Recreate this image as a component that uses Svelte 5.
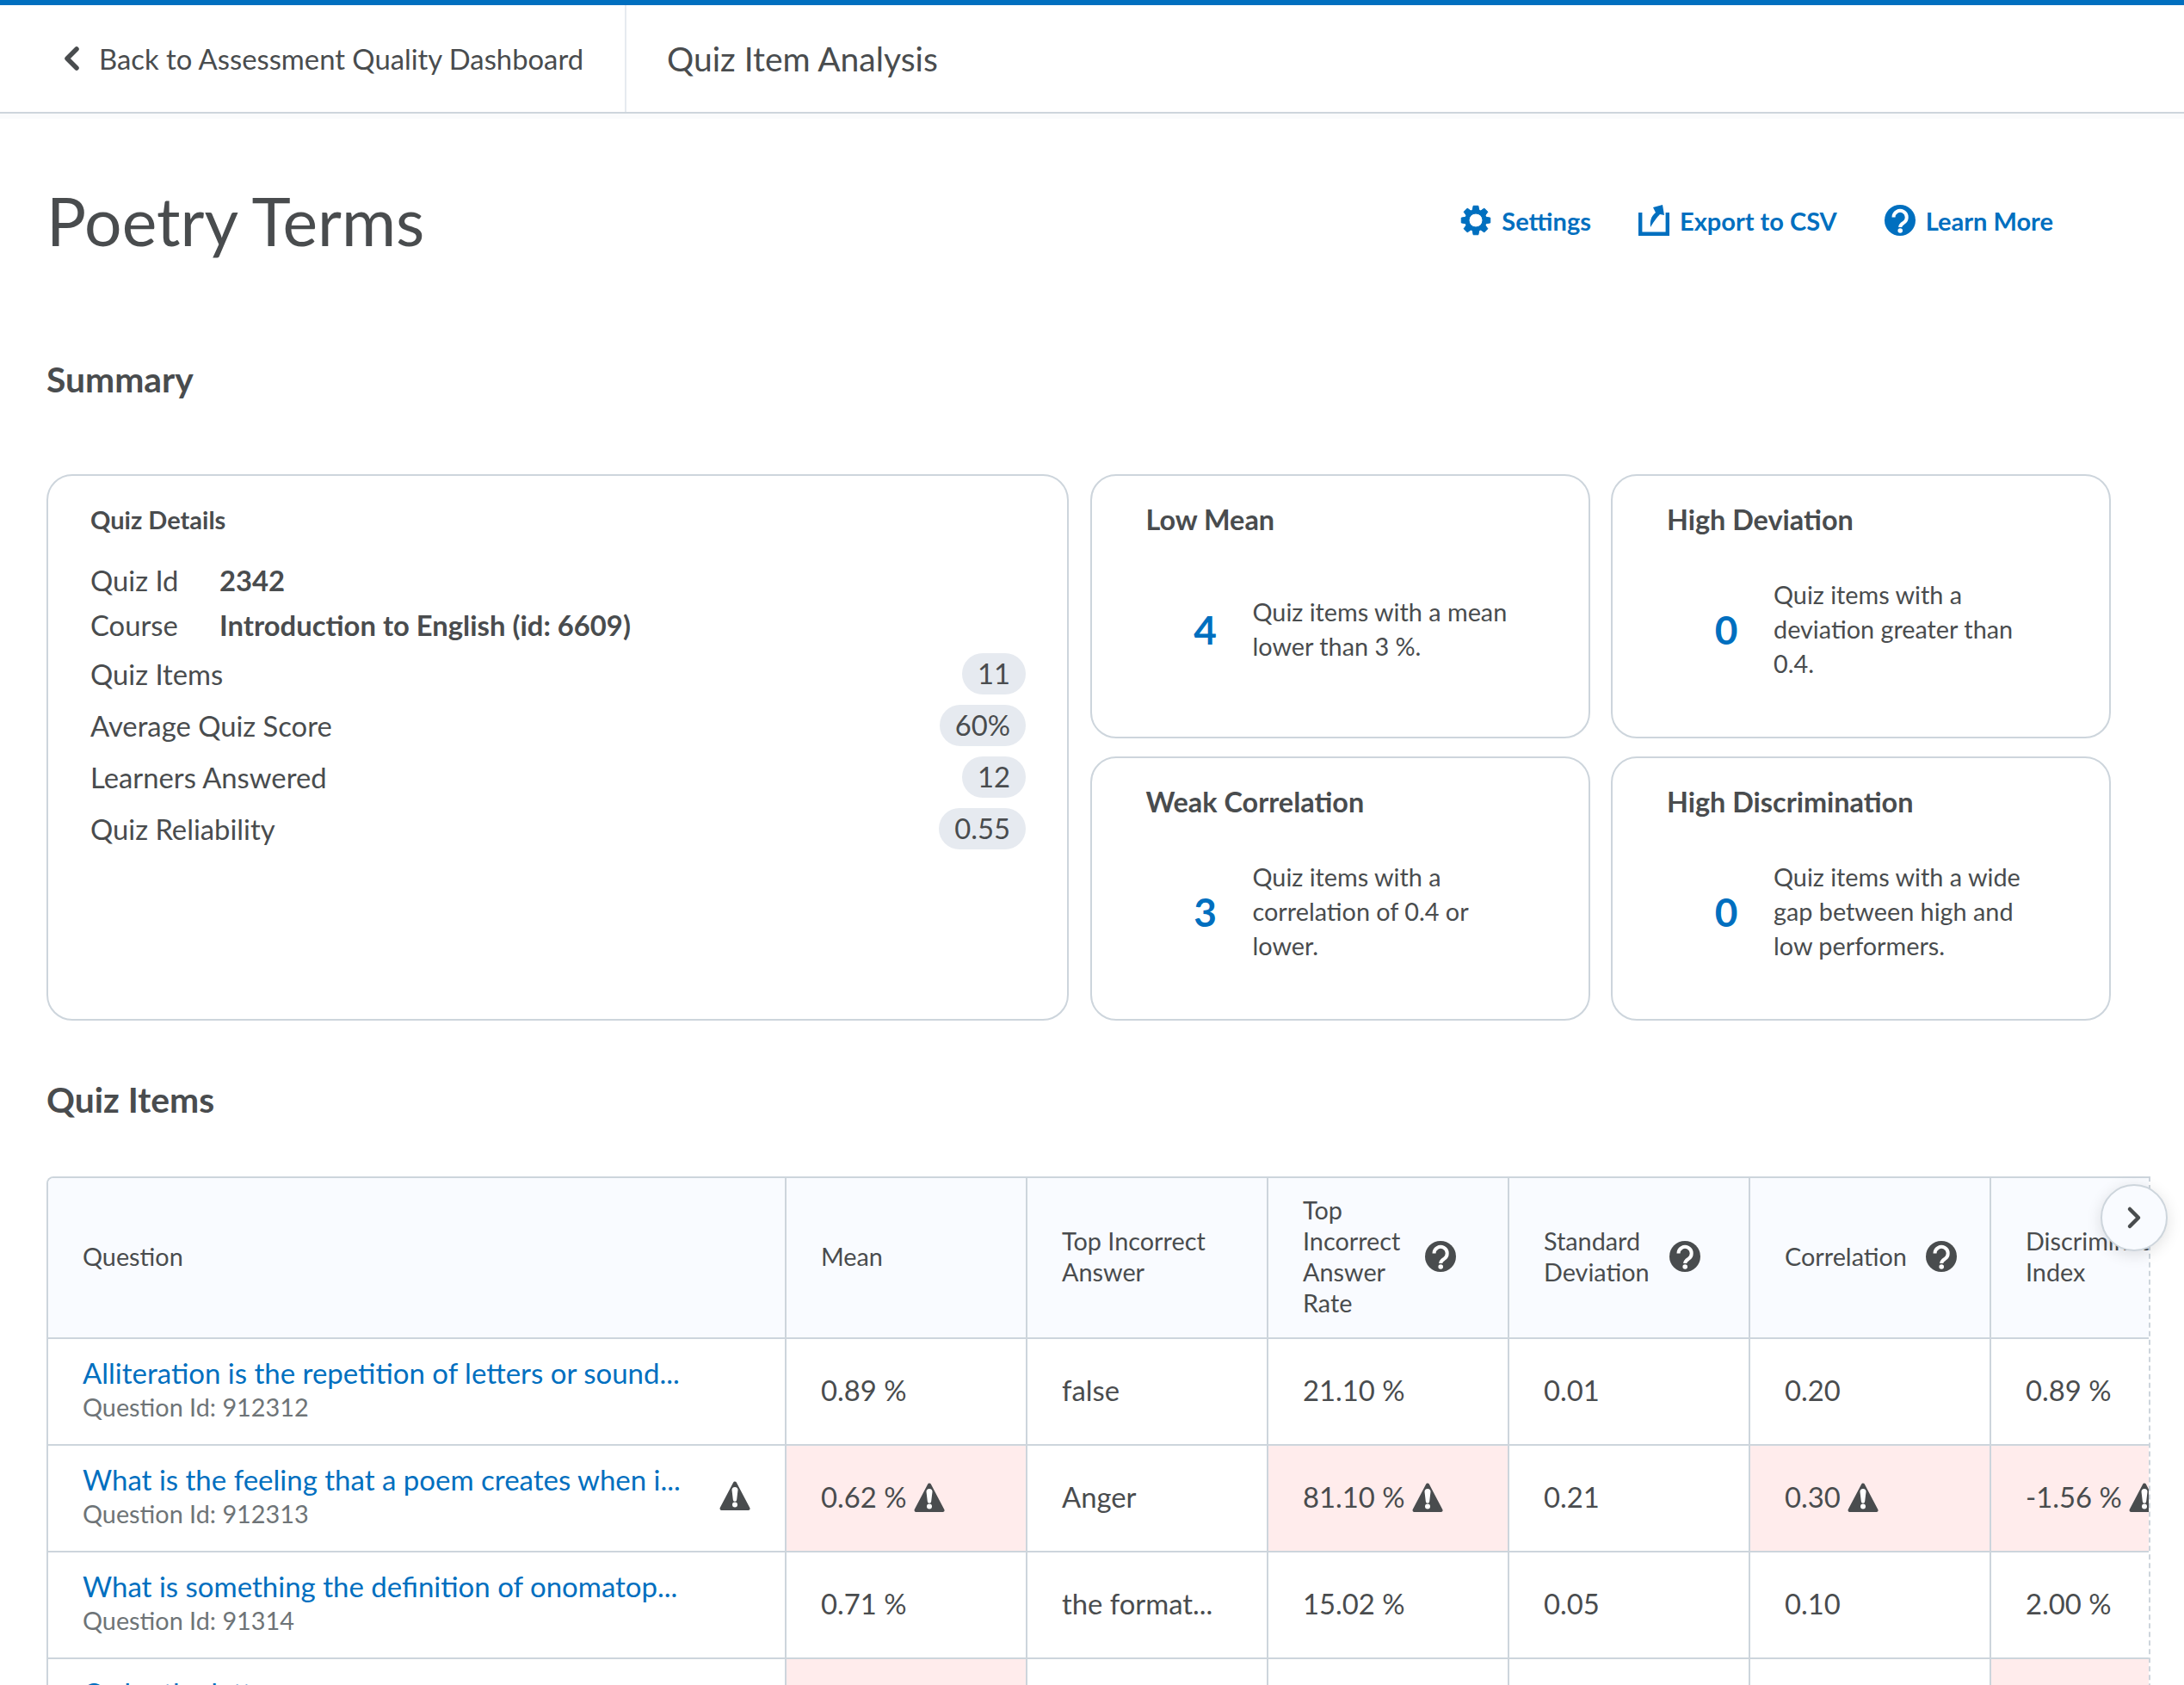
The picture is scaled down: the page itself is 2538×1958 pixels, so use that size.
<script lang="ts">
	const columns = [
		{ label: 'Question' },
		{ label: 'Mean' },
		{ label: 'Top Incorrect Answer' },
		{ label: 'Top Incorrect Answer Rate', help: true, fit: 'fit-rate' },
		{ label: 'Standard Deviation', help: true, fit: 'fit-deviation' },
		{ label: 'Correlation', help: true },
		{ label: 'Discrimination Index' }
	];

	const rows = [
		{
			title: 'Alliteration is the repetition of letters or sound...',
			id: 912312,
			cells: ['0.89 %', 'false', '21.10 %', '0.01', '0.20', '0.89 %'],
			flagged: []
		},
		{
			title: 'What is the feeling that a poem creates when i...',
			id: 912313,
			warn: true,
			cells: ['0.62 %', 'Anger', '81.10 %', '0.21', '0.30', '-1.56 %'],
			flagged: [0, 2, 4, 5]
		},
		{
			title: 'What is something the definition of onomatop...',
			id: 91314,
			cells: ['0.71 %', 'the format...', '15.02 %', '0.05', '0.10', '2.00 %'],
			flagged: []
		},
		{
			title: 'Order the letters...',
			id: 91315,
			cells: ['', '', '', '', '', ''],
			flagged: [0, 5]
		}
	];

	const details = [
		{ label: 'Quiz Items', value: '11' },
		{ label: 'Average Quiz Score', value: '60%' },
		{ label: 'Learners Answered', value: '12' },
		{ label: 'Quiz Reliability', value: '0.55' }
	];

	const summaries = [
		{ title: 'Low Mean', count: 4, text: 'Quiz items with a mean lower than 3 %.' },
		{ title: 'High Deviation', count: 0, text: 'Quiz items with a deviation greater than 0.4.' },
		{ title: 'Weak Correlation', count: 3, text: 'Quiz items with a correlation of 0.4 or lower.' },
		{ title: 'High Discrimination', count: 0, text: 'Quiz items with a wide gap between high and low performers.' }
	];

	// 8 tooth gear outline, in a 36 box
	function gearPoints() {
		const pts = [];
		for (let i = 0; i < 8; i++) {
			const a = (i * Math.PI) / 4;
			for (const [r, d] of [[12.5, -0.3], [17, -0.17], [17, 0.17], [12.5, 0.3]]) {
				pts.push(`${(18 + r * Math.sin(a + d)).toFixed(2)},${(18 - r * Math.cos(a + d)).toFixed(2)}`);
			}
		}
		return pts.join(' ');
	}
</script>

{#snippet helpIcon(color)}
	<svg class="icon" viewBox="0 0 36 36" aria-hidden="true">
		<circle cx="18" cy="18" r="18" fill={color} />
		<path d="M10.500 14.500a7.600 7.600 0 1 1 11.600 6.400c-2.300 1.500-3.900 2.500-3.900 5" fill="none" stroke="#fff" stroke-width="4" />
		<circle cx="18.200" cy="30" r="2.800" fill="#fff" />
	</svg>
{/snippet}

{#snippet warnIcon()}
	<svg class="icon" viewBox="0 0 36 36" aria-hidden="true">
		<polygon points="18,3.500 33.500,33 2.500,33" fill="#494c4e" stroke="#494c4e" stroke-width="4" stroke-linejoin="round" />
		<path d="M14.500 11.500a3.500 3.500 0 0 1 7 0l-1.300 11a2.200 2.200 0 0 1-4.400 0z" fill="#fff" />
		<circle cx="18" cy="28.500" r="3" fill="#fff" />
	</svg>
{/snippet}

<div class="page">
	<header class="topbar">
		<a class="back" href="#back">
			<svg class="chevron" viewBox="0 0 20 28" aria-hidden="true">
				<path d="M16 3 5 14l11 11" fill="none" stroke="#494c4e" stroke-width="5.500" stroke-linecap="round" stroke-linejoin="round" />
			</svg>
			Back to Assessment Quality Dashboard
		</a>
		<div class="crumb">Quiz Item Analysis</div>
	</header>

	<main class="content">
		<div class="title-row">
			<h1>Poetry Terms</h1>
			<nav class="actions">
				<a href="#settings">
					<svg class="icon" viewBox="0 0 36 36" aria-hidden="true">
						<path
							fill-rule="evenodd"
							fill="#006fbf"
							stroke="#006fbf"
							stroke-width="1"
							stroke-linejoin="round"
							d="M{gearPoints()}Z M18 10a8 8 0 1 0 0 16a8 8 0 1 0 0-16Z"
						/>
					</svg>
					Settings
				</a>
				<a href="#export">
					<svg class="icon" viewBox="0 0 36 36" aria-hidden="true">
						<path d="M2.200 9v24.800h31.600V9" fill="none" stroke="#006fbf" stroke-width="4.400" />
						<path d="M14 26C13 17 16 12 20 9L17 3 28 0 30 12 25 11C22 14 18 19 14 26Z" fill="#006fbf" />
					</svg>
					Export to CSV
				</a>
				<a href="#learn">
					{@render helpIcon('#006fbf')}
					Learn More
				</a>
			</nav>
		</div>

		<h2 class="summary-heading">Summary</h2>

		<section class="summary">
			<div class="card details">
				<h3>Quiz Details</h3>
				<dl class="facts">
					<dt>Quiz Id</dt>
					<dd>2342</dd>
					<dt>Course</dt>
					<dd>Introduction to English (id: 6609)</dd>
				</dl>
				{#each details as item}
					<div class="stat">
						<span>{item.label}</span>
						<span class="pill">{item.value}</span>
					</div>
				{/each}
			</div>
			{#each summaries as s}
				<div class="card metric">
					<h4>{s.title}</h4>
					<div class="metric-body">
						<span class="count">{s.count}</span>
						<p>{s.text}</p>
					</div>
				</div>
			{/each}
		</section>

		<h2 class="items-heading">Quiz Items</h2>

		<div class="table-wrap">
			<button class="next" aria-label="Scroll right">
				<svg viewBox="0 0 20 28" aria-hidden="true">
					<path d="M5 4l10 10L5 24" fill="none" stroke="#494c4e" stroke-width="4.500" stroke-linecap="round" stroke-linejoin="round" />
				</svg>
			</button>
			<div class="table-clip">
				<table>
					<colgroup>
						<col class="col-question" />
						{#each columns.slice(1) as _}
							<col class="col-value" />
						{/each}
					</colgroup>
					<thead>
						<tr>
							{#each columns as col}
								<th>
									<div class="th-inner">
										<span class={col.fit}>{col.label}</span>
										{#if col.help}
											{@render helpIcon('#494c4e')}
										{/if}
									</div>
								</th>
							{/each}
						</tr>
					</thead>
					<tbody>
						{#each rows as row}
							<tr>
								<td>
									<div class="question">
										<div>
											<a href="#q{row.id}">{row.title}</a>
											<div class="qid">Question Id: {row.id}</div>
										</div>
										{#if row.warn}
											{@render warnIcon()}
										{/if}
									</div>
								</td>
								{#each row.cells as cell, i}
									<td class:flagged={row.flagged.includes(i)}>
										<div class="value">
											<span>{cell}</span>
											{#if cell && row.flagged.includes(i)}
												{@render warnIcon()}
											{/if}
										</div>
									</td>
								{/each}
							</tr>
						{/each}
					</tbody>
				</table>
			</div>
		</div>
	</main>
</div>

<style>
	:global(body) {
		margin: 0;
		background: #fff;
	}

	.page {
		height: 100vh;
		overflow: hidden;
		font-family: Lato, 'Noto Sans', sans-serif;
		font-size: 32.8px;
		color: #494c4e;
	}

	a {
		color: #006fbf;
		text-decoration: none;
	}

	.topbar {
		display: flex;
		height: 124px;
		border-top: 6px solid #006fbf;
		border-bottom: 2px solid #cdd5dc;
		box-shadow: 0 6px 0 #fafbfc;
	}

	.back {
		display: flex;
		align-items: center;
		gap: 22px;
		width: 728px;
		box-sizing: border-box;
		padding-left: 73px;
		border-right: 2px solid #e6eaf0;
		color: #494c4e;
	}

	.chevron {
		width: 20px;
		height: 28px;
	}

	.crumb {
		display: flex;
		align-items: center;
		padding-left: 47px;
		font-size: 39px;
	}

	.content {
		padding-left: 54px;
	}

	.title-row {
		display: flex;
		align-items: center;
		justify-content: space-between;
		height: 130px;
		margin-top: 59px;
	}

	h1 {
		margin: 0;
		font-size: 76.8px;
		font-weight: 400;
		line-height: 130px;
	}

	.actions {
		display: flex;
		gap: 55px;
		margin-right: 152px;
		font-size: 29px;
		font-weight: 700;
	}

	.actions a {
		display: flex;
		align-items: center;
		gap: 12px;
	}

	.icon {
		flex: none;
		width: 36px;
		height: 36px;
	}

	h2 {
		margin: 0;
		font-size: 40.8px;
		font-weight: 700;
		line-height: 60px;
	}

	.summary-heading {
		margin-top: 90px;
		margin-bottom: 80px;
	}

	.summary {
		display: grid;
		grid-template-columns: 1188px 581px 581px;
		grid-template-rows: 307px 307px;
		gap: 21px 24.5px;
	}

	.card {
		box-sizing: border-box;
		border: 2px solid #cdd5dc;
		border-radius: 30px;
	}

	.details {
		grid-row: span 2;
		padding: 31px 48px 31px 49px;
	}

	h3 {
		margin: 0 0 25px;
		font-size: 29px;
		font-weight: 700;
		line-height: 40px;
	}

	.facts {
		display: grid;
		grid-template-columns: 150px 1fr;
		margin: 0 0 6px;
		line-height: 52px;
	}

	dd {
		margin: 0;
		font-weight: 700;
	}

	.stat {
		display: flex;
		align-items: center;
		justify-content: space-between;
		height: 48px;
		margin-bottom: 12px;
	}

	.pill {
		padding: 0 18px;
		border-radius: 24px;
		background: #e6eaf0;
		line-height: 48px;
	}

	.metric {
		padding: 31px 40px 0 63px;
	}

	h4 {
		margin: 0;
		font-size: 32.4px;
		font-weight: 700;
		line-height: 40px;
	}

	.metric-body {
		display: flex;
		align-items: center;
		height: 174px;
		margin-top: 20px;
	}

	.count {
		flex: none;
		width: 124px;
		padding-left: 14px;
		box-sizing: border-box;
		text-align: center;
		color: #006fbf;
		font-size: 46px;
		font-weight: 700;
	}

	.metric-body p {
		margin: 0;
		width: 330px;
		font-size: 28.8px;
		line-height: 40px;
	}

	.items-heading {
		margin-top: 62px;
		margin-bottom: 59px;
	}

	.table-wrap {
		position: relative;
		width: 2445px;
	}

	.table-clip {
		overflow: hidden;
		border-top: 2px solid #cdd5dc;
		border-left: 2px solid #cdd5dc;
		border-right: 2px dashed #cdd5dc;
		border-top-left-radius: 8px;
		box-sizing: border-box;
	}

	table {
		table-layout: fixed;
		width: 2537px;
		border-collapse: collapse;
	}

	.col-question {
		width: 857px;
	}

	.col-value {
		width: 280px;
	}

	th,
	td {
		box-sizing: border-box;
		padding: 0 40px;
		border-right: 2px solid #cdd5dc;
		border-bottom: 2px solid #cdd5dc;
		text-align: left;
		vertical-align: middle;
	}

	th {
		height: 186px;
		background: #f9fbff;
		font-size: 28.8px;
		font-weight: 400;
		line-height: 36px;
	}

	td {
		height: 124px;
	}

	.th-inner,
	.value {
		display: flex;
		align-items: center;
	}

	.th-inner {
		gap: 22px;
		padding-bottom: 3px;
	}

	.fit-rate {
		width: 120px;
	}

	.fit-deviation {
		width: 124px;
	}

	.value {
		gap: 8px;
		padding-bottom: 3px;
		white-space: nowrap;
	}

	.flagged {
		background: #ffecec;
	}

	.question {
		display: flex;
		align-items: center;
		justify-content: space-between;
		padding-bottom: 7px;
	}

	.question a {
		font-size: 33px;
		line-height: 40px;
	}

	.qid {
		margin-top: 2px;
		font-size: 28.8px;
		line-height: 36px;
		color: #6e7477;
	}

	.next {
		position: absolute;
		top: 9px;
		left: 2387px;
		z-index: 1;
		display: flex;
		align-items: center;
		justify-content: center;
		width: 78px;
		height: 78px;
		padding: 0;
		border: 2px solid #cdd5dc;
		border-radius: 50%;
		background: #f9fbff;
		box-shadow: 0 4px 18px rgba(0, 0, 0, 0.12);
	}

	.next svg {
		width: 20px;
		height: 28px;
	}
</style>
